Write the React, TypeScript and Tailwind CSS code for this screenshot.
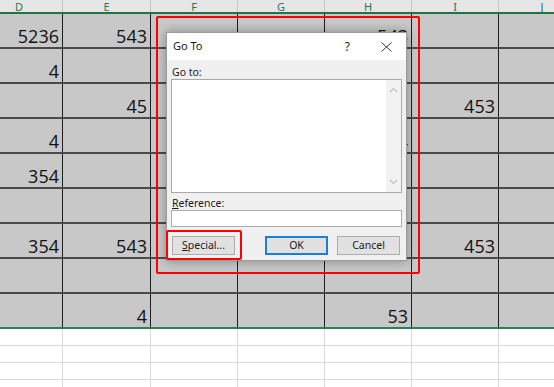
import React from "react";

const widths = [87, 88, 87, 87, 87, 87, 87];
const letters = ["D", "E", "F", "G", "H", "I", "J"];
const rows: string[][] = [
  ["5236", "543", "", "", "543", "", ""],
  ["4", "", "", "", "", "", ""],
  ["", "45", "", "", "", "453", ""],
  ["4", "", "", "", "4", "", ""],
  ["354", "", "", "", "", "", ""],
  ["", "", "", "", "", "", ""],
  ["354", "543", "", "", "", "453", ""],
  ["", "", "", "", "", "", ""],
  ["", "4", "", "", "53", "", ""],
];

function Chevron({ up }: { up?: boolean }) {
  return (
    <svg width="9" height="6" viewBox="0 0 9 6">
      <path
        d={up ? "M1 5 L4.5 1.5 L8 5" : "M1 1 L4.5 4.5 L8 1"}
        fill="none"
        stroke="#bdbdbd"
        strokeWidth="1.2"
      />
    </svg>
  );
}

export default function App() {
  return (
    <div className="relative w-[554px] h-[387px] overflow-hidden bg-white">
      <div className="ml-[-24px]">
        {/* header */}
        <div className="flex h-[14px] bg-[#e6e6e6] border-b-2 border-[#217346]">
          {letters.map((l, i) => (
            <div
              key={l}
              style={{ width: widths[i] }}
              className="shrink-0 border-r border-[#c8c8c8] flex items-center justify-center text-[11px] leading-none text-[#2b7256] font-['Noto_Sans',sans-serif]"
            >
              {l}
            </div>
          ))}
        </div>
        {/* gray rows */}
        {rows.map((r, ri) => (
          <div
            key={ri}
            className={
              "flex h-[35px] bg-[#c8c8c8] border-b-2 " +
              (ri === rows.length - 1 ? "border-[#2e7d5b]" : "border-[#4a4a4a]")
            }
          >
            {r.map((v, ci) => (
              <div
                key={ci}
                style={{ width: widths[ci] }}
                className="shrink-0 border-r border-[#1e1e1e] flex items-end justify-end pr-[3px] pb-[2px] text-[18px] leading-none text-[#111] font-['Open_Sans',sans-serif]"
              >
                {v}
              </div>
            ))}
          </div>
        ))}
        {/* white rows */}
        {[0, 1, 2, 3].map((ri) => (
          <div key={ri} className="flex h-[17px] border-b border-[#dadada]">
            {widths.map((w, ci) => (
              <div
                key={ci}
                style={{ width: w }}
                className="shrink-0 border-r border-[#dadada]"
              />
            ))}
          </div>
        ))}
      </div>

      {/* big red outline */}
      <div className="absolute left-[156px] top-[16px] w-[264px] h-[258px] border-2 border-[#ff0000] rounded-[2px]" />

      {/* dialog */}
      <div className="absolute left-[166px] top-[32px] w-[241px] h-[229px] border border-[#9c9c9c] shadow-[0_0_10px_rgba(0,0,0,0.35)] bg-[#f0f0f0] flex flex-col font-['Noto_Sans',sans-serif] text-[#1a1a1a]">
        <div className="h-[27px] bg-white flex items-center pl-[6px] pr-[14px] text-[11px]">
          <span>Go To</span>
          <span className="ml-auto mr-[31px] text-[12px]">?</span>
          <svg width="11" height="10" viewBox="0 0 11 10">
            <path d="M0.5 0.5 L10.5 9.5 M10.5 0.5 L0.5 9.5" stroke="#333" strokeWidth="1" />
          </svg>
        </div>
        <div className="flex flex-col px-[4px] pt-[6px]">
          <div className="h-[12px] leading-[12px] text-[10.5px] pl-[1px]">Go to:</div>
          <div className="relative mt-[1px] h-[114px] bg-white border border-[#a9a9a9]">
            <div className="absolute right-0 top-0 bottom-0 w-[15px] bg-[#f2f2f2] flex flex-col items-center justify-between py-[7px]">
              <Chevron up />
              <Chevron />
            </div>
          </div>
          <div className="mt-[4px] h-[12px] leading-[12px] text-[10.5px] pl-[1px]">
            <span className="underline">R</span>eference:
          </div>
          <div className="mt-[1px] h-[17px] bg-white border border-[#acacac]" />
          <div className="mt-[9px] flex text-[10.5px]">
            <div className="ml-[1px] w-[63px] h-[19px] bg-[#e1e1e1] border border-[#adadad] flex items-center justify-center">
              <span>
                <span className="underline">S</span>pecial...
              </span>
            </div>
            <div className="ml-[30px] w-[63px] h-[19px] bg-[#e1e1e1] border-2 border-[#1a7fd6] flex items-center justify-center">
              OK
            </div>
            <div className="ml-[9px] w-[63px] h-[19px] bg-[#e1e1e1] border border-[#adadad] flex items-center justify-center">
              Cancel
            </div>
          </div>
        </div>
      </div>

      {/* red outline around Special */}
      <div className="absolute left-[166px] top-[230px] w-[76px] h-[30px] border-2 border-[#ff0000] rounded-[2px]" />
    </div>
  );
}
